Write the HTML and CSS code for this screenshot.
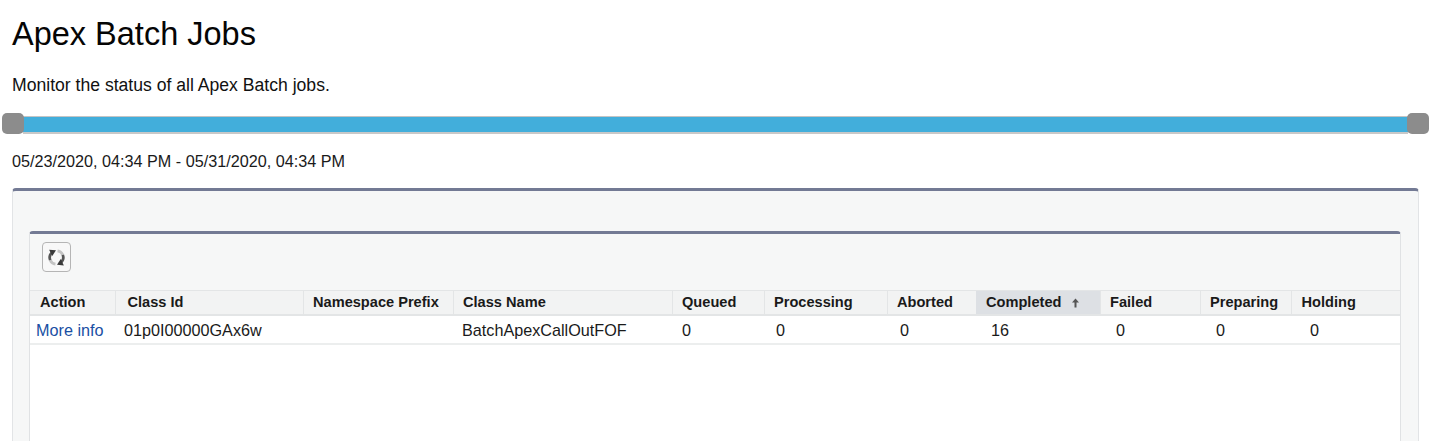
FILE: index.html
```html
<!DOCTYPE html>
<html lang="en">
<head>
<meta charset="utf-8">
<title>Apex Batch Jobs</title>
<link rel="stylesheet" href="styles.css">
</head>
<body>
<h1 class="title">Apex Batch Jobs</h1>
<p class="desc">Monitor the status of all Apex Batch jobs.</p>
<div class="slider">
  <span class="handle"></span>
  <div class="track"></div>
  <span class="handle"></span>
</div>
<p class="range">05/23/2020, 04:34 PM - 05/31/2020, 04:34 PM</p>
<section class="outer">
  <div class="inner">
    <div class="toolbar">
      <button class="refresh" type="button" aria-label="Refresh">
        <svg viewBox="0 0 20 20" width="21" height="21">
          <path class="arc-light" d="M4 12.5 A6.5 6.5 0 0 0 9 16.4"/>
          <path class="arc" d="M4 12.5 A6.5 6.5 0 0 1 5.5 5.5"/>
          <path class="tip" d="M3 2.5 L9.5 3 L6 8.5 Z"/>
          <path class="arc-light" d="M16 7.5 A6.5 6.5 0 0 0 11 3.6"/>
          <path class="arc" d="M16 7.5 A6.5 6.5 0 0 1 14.5 14.5"/>
          <path class="tip" d="M17 17.5 L10.5 17 L14 11.5 Z"/>
        </svg>
      </button>
    </div>
    <table class="jobs">
      <colgroup>
        <col class="c-action"><col class="c-id"><col class="c-ns"><col class="c-name"><col class="c-queued"><col class="c-proc"><col class="c-abort"><col class="c-comp"><col class="c-fail"><col class="c-prep"><col class="c-hold">
      </colgroup>
      <thead>
        <tr>
          <th class="h-first">Action</th><th class="h-id">Class Id</th><th>Namespace Prefix</th><th>Class Name</th><th>Queued</th><th>Processing</th><th>Aborted</th>
          <th class="sorted">Completed<svg class="arrow" viewBox="0 0 9 10" width="9" height="10"><path d="M4.5 0.5 L8 4.5 L5.5 4.5 L5.5 9.5 L3.5 9.5 L3.5 4.5 L1 4.5 Z"/></svg></th>
          <th>Failed</th><th>Preparing</th><th class="h-first">Holding</th>
        </tr>
      </thead>
      <tbody>
        <tr>
          <td class="action"><a href="#">More info</a></td><td class="pad-9">01p0I00000GAx6w</td><td></td><td class="pad-9">BatchApexCallOutFOF</td><td>0</td><td class="pad-12">0</td><td class="pad-13">0</td><td class="pad-15">16</td><td class="pad-16">0</td><td class="pad-16">0</td><td class="pad-19">0</td>
        </tr>
      </tbody>
    </table>
  </div>
</section>
</body>
</html>
```
FILE: styles.css
```css
html, body { margin: 0; height: 441px; overflow: hidden; background: #fff; }
body { font-family: "Liberation Sans", Arial, sans-serif; color: #111; }
.title { margin: 0; padding: 16px 0 0 12px; font-size: 32.5px; line-height: 36px; font-weight: 400; color: #050505; }
.desc { margin: 0; padding: 23px 0 0 12px; font-size: 17.6px; line-height: 20px; color: #111; }
.slider { display: flex; align-items: flex-start; margin: 18px 8px 0 2px; height: 22px; }
.track { flex: 1; height: 18px; margin: 3px -1px 0; background: #42aedb; border-top: 1px solid #c4c4c4; border-bottom: 2px solid #c8c8c8; box-sizing: border-box; }
.handle { position: relative; z-index: 1; width: 22px; height: 21px; border-radius: 5px; background: #8c8c8c; }
.range { margin: 0; padding: 17px 0 0 12px; font-size: 16.2px; line-height: 18px; color: #1a1a1a; }
.outer { margin: 18px 18px 0 12px; height: 253px; box-sizing: border-box; padding: 40px 17px 0 16px; background: #f6f7f7; border: 1px solid #e2e4e6; border-bottom: 0; border-top: 3px solid #737a94; border-radius: 4px 4px 0 0; }
.inner { height: 210px; background: #fff; border: 1px solid #e0e2e4; border-bottom: 0; border-top: 3px solid #737a94; border-radius: 4px 4px 0 0; box-sizing: border-box; }
.toolbar { height: 56px; box-sizing: border-box; padding: 8px 0 0 12px; background: #f6f7f7; }
.refresh { display: flex; align-items: center; justify-content: center; width: 29px; height: 30px; padding: 0; background: #f8f8f8; border: 1px solid #b5b5b5; border-radius: 4px; }
.arc { fill: none; stroke: #555; stroke-width: 2.6; }
.arc-light { fill: none; stroke: #c4c4c4; stroke-width: 2.6; }
.tip { fill: #3a3a3a; }
.jobs { width: 100%; table-layout: fixed; border-collapse: collapse; font-size: 16.2px; background: #fff; }
.c-action { width: 85px; }
.c-id { width: 188px; }
.c-ns { width: 150px; }
.c-name { width: 219px; }
.c-queued { width: 92px; }
.c-proc { width: 123px; }
.c-abort { width: 89px; }
.c-comp { width: 124px; }
.c-fail { width: 100px; }
.c-prep { width: 91px; }
.jobs th { height: 24px; padding: 0 0 0 9.5px; text-align: left; font-size: 14.6px; font-weight: 700; color: #1a1a1a; background: #f2f3f3; border-top: 1px solid #e3e5e6; border-bottom: 2px solid #e3e5e6; border-left: 1px solid #e3e5e6; box-sizing: border-box; }
.jobs th.h-first { padding-left: 10px; }
.jobs th:first-child { border-left: 0; }
.jobs th.h-id { padding-left: 12px; }
.jobs th.sorted { background: #dde0e4; border-left-color: #dde0e4; }
.arrow { margin-left: 10px; fill: #555; vertical-align: -1px; }
.jobs td { height: 29px; padding: 3px 0 0 10px; color: #1a1a1a; border-bottom: 2px solid #eceeee; box-sizing: border-box; }
.jobs td.action { padding-left: 6px; }
.jobs td.pad-9 { padding-left: 9px; }
.jobs td.pad-12 { padding-left: 12px; }
.jobs td.pad-13 { padding-left: 13px; }
.jobs td.pad-15 { padding-left: 15px; }
.jobs td.pad-16 { padding-left: 16px; }
.jobs td.pad-19 { padding-left: 19px; }
.jobs a { color: #1a4fa3; text-decoration: none; }
```
